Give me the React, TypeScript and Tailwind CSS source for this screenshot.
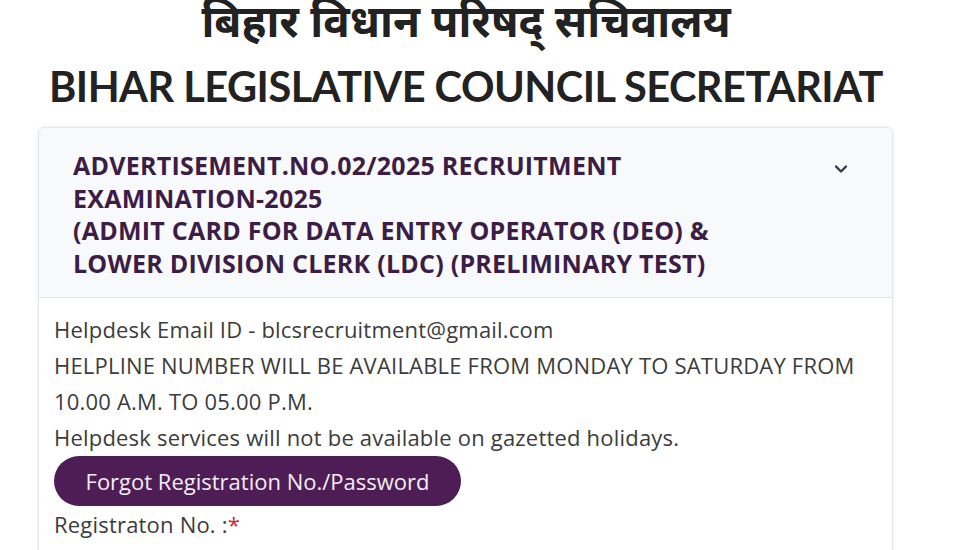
import React from "react";

export default function App() {
  return (
    <div className="w-[968px] h-[550px] overflow-hidden bg-white" style={{ fontFamily: '"Open Sans", "Noto Sans", sans-serif' }}>
      <div className="w-[932px] flex flex-col items-center">
        <h1 className="text-[44px] leading-[54px] font-bold text-[#222]" style={{ fontFamily: '"Noto Sans Devanagari", "Lohit Devanagari", "Noto Sans", sans-serif' }}>
          बिहार विधान परिषद् सचिवालय
        </h1>
        <h2 className="mt-[7px] text-[41.5px] leading-[50px] font-bold text-[#222] tracking-[-0.5px]" style={{ fontFamily: 'Lato, "Open Sans", sans-serif' }}>
          BIHAR LEGISLATIVE COUNCIL SECRETARIAT
        </h2>
      </div>
      <div className="ml-[38px] mt-[16px] w-[855px] h-[460px] border border-[#e3e5e8] rounded-[6px] shadow-[0_0_4px_rgba(0,0,0,0.08)] overflow-hidden">
        <div className="flex items-start justify-between bg-[#f8f9fb] border-b border-[#e3e5e8] pl-[34px] pr-[44px] pt-[21px] pb-[18px]">
          <div className="text-[25px] leading-[32.5px] font-bold text-[#3d1d45] tracking-[0.25px]">
            ADVERTISEMENT.NO.02/2025 RECRUITMENT<br />
            EXAMINATION-2025<br />
            (ADMIT CARD FOR DATA ENTRY OPERATOR (DEO) &amp;<br />
            LOWER DIVISION CLERK (LDC) (PRELIMINARY TEST)
          </div>
          <svg width="14" height="10" viewBox="0 0 14 10" className="mt-[15px]">
            <path d="M2 2.5 L7 7.5 L12 2.5" fill="none" stroke="#3b3552" strokeWidth="2.4" strokeLinecap="round" strokeLinejoin="round" />
          </svg>
        </div>
        <div className="px-[15px] pt-[13px] text-[22px] leading-[36px] text-[#3c3c3c] tracking-[0.2px]">
          <div>Helpdesk Email ID - blcsrecruitment@gmail.com</div>
          <div>HELPLINE NUMBER WILL BE AVAILABLE FROM MONDAY TO SATURDAY FROM</div>
          <div>10.00 A.M. TO 05.00 P.M.</div>
          <div>Helpdesk services will not be available on gazetted holidays.</div>
          <button className="mt-[1px] h-[50px] w-[407px] rounded-full bg-[#4f1d55] text-[#f3eef5] text-[22px] leading-[50px] tracking-normal">
            Forgot Registration No./Password
          </button>
          <div className="mt-[0px]">
            Registraton No. :<span className="text-[#e0202a]">*</span>
          </div>
        </div>
      </div>
    </div>
  );
}
